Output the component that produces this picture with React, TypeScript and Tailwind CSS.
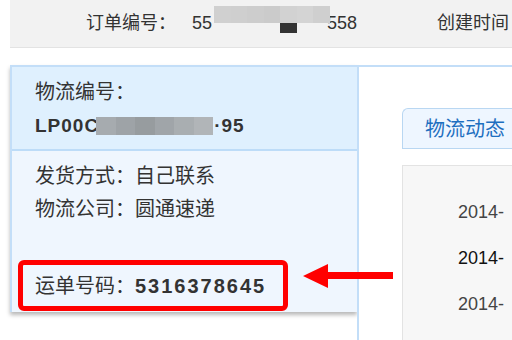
import React from "react";

const font = { fontFamily: '"Liberation Sans", "Noto Sans CJK SC", sans-serif' };

export default function App() {
  return (
    <div className="relative w-[512px] h-[340px] overflow-hidden bg-white text-[#333]" style={font}>
      {/* top bar */}
      <div className="ml-[10px] h-[48px] bg-[#f2f2f2] border-b border-[#e3e3e3] flex items-center text-[18px] whitespace-nowrap">
        <span className="ml-[76px] w-[106px]">订单编号：</span>
        <span className="w-[22px]">55</span>
        <span className="w-[113px]" />
        <span className="w-[110px]">558</span>
        <span>创建时间</span>
      </div>
      {/* redaction on order number */}
      <div className="absolute left-[214px] top-[6px] w-[116px] h-[17px] flex">
        <div className="flex-1 bg-[#d0d0d0]" />
        <div className="flex-1 bg-[#cfcfcf]" />
        <div className="flex-1 bg-[#cdcdcd]" />
        <div className="flex-1 bg-[#cbcbcb]" />
        <div className="flex-1 bg-[#d2d2d2]" />
        <div className="flex-1 bg-[#d4d4d4]" />
        <div className="flex-1 bg-[#cfcfcf]" />
      </div>
      <div className="absolute left-[280px] top-[23px] w-[17px] h-[10px] bg-[#333]" />

      <div className="mt-[17px] ml-[10px] flex h-[275px]">
        {/* left panel */}
        <div className="w-[347px] self-start border-l-2 border-t-2 border-[#c3def8] shadow-[0_3px_4px_rgba(0,0,0,0.28)] text-[20px] leading-[33px] whitespace-nowrap">
          <div className="h-[84px] bg-[#dff0fe] border-b-2 border-[#bddcf8] pl-[23px] pt-[9px]">
            <div>物流编号：</div>
            <div className="flex items-center font-bold text-[19px]">
              <span className="tracking-[1px]">LP00C</span>
              <span className="-ml-[3px] w-[117px] h-[18px] flex">
                <span className="flex-1 bg-[#a6abaf]" />
                <span className="flex-1 bg-[#9ea3a7]" />
                <span className="flex-1 bg-[#979c9f]" />
                <span className="flex-1 bg-[#a0a5a9]" />
                <span className="flex-1 bg-[#a9aeb1]" />
                <span className="flex-1 bg-[#b1b5b8]" />
              </span>
              <span className="ml-[1px] tracking-[1px]">·95</span>
            </div>
          </div>
          <div className="h-[161px] bg-[#eff6fe] pl-[23px] pt-[9px]">
            <div>发货方式：自己联系</div>
            <div>物流公司：圆通速递</div>
            <div className="mt-[44px]">
              运单号码：<span className="font-bold tracking-[2px]">5316378645</span>
            </div>
          </div>
        </div>
        {/* right area */}
        <div className="flex-1 border-l-2 border-t-2 border-[#c3def8] bg-white pl-[43px] pt-[41px]">
          <div className="h-[41px] rounded-tl-[6px] border border-r-0 border-[#b9d7f2] bg-[#eef6ff] pl-[22px] flex items-center text-[20px] text-[#1e6fc0] whitespace-nowrap">
            物流动态
          </div>
          <div className="mt-[16px] h-[200px] border border-r-0 border-[#e3e3e3] bg-[#f7f7f7] pl-[55px] pt-[23px] text-[18px] leading-[46px] text-[#444] whitespace-nowrap">
            <div>2014-</div>
            <div className="text-[#111]">2014-</div>
            <div>2014-</div>
          </div>
        </div>
      </div>

      {/* annotation box */}
      <div className="absolute left-[18px] top-[260px] w-[270px] h-[51px] border-[5px] border-[#ff0000] rounded-[6px]" />
      {/* arrow */}
      <svg className="absolute left-[300px] top-[260px]" width="96" height="32" viewBox="0 0 96 32">
        <polygon points="3,16 28,4 28,12 93,12 93,19 28,19 28,28" fill="#ff0000" />
      </svg>
    </div>
  );
}
